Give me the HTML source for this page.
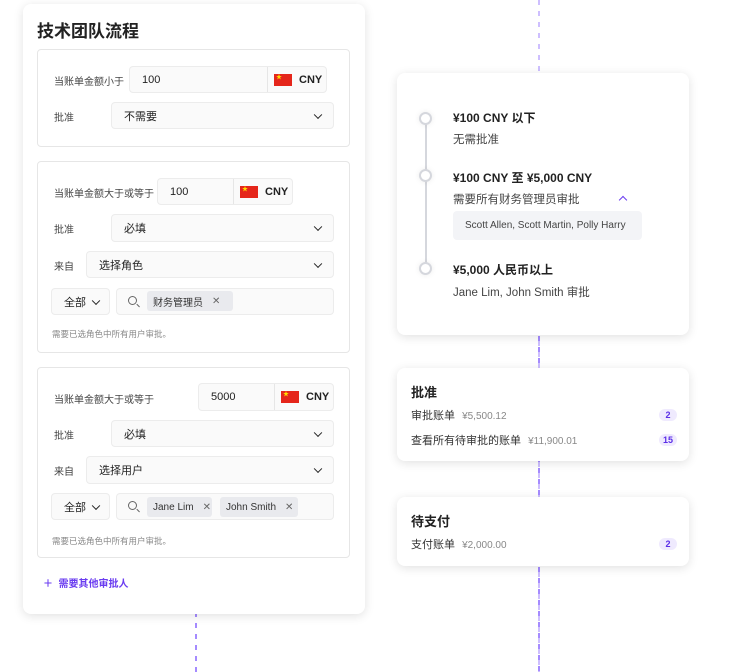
<!DOCTYPE html><html><head><meta charset="utf-8"><style>
*{box-sizing:border-box;margin:0;padding:0}
body{width:756px;height:672px;background:#fff;position:relative;overflow:hidden;font-family:"Liberation Sans","Noto Sans CJK SC",sans-serif;color:#222}
.a{position:absolute}
.dash{position:absolute;width:1.5px;background:repeating-linear-gradient(#a58bff 0 5px,transparent 5px 11px)}
.card{position:absolute;background:#fff;border-radius:8px;box-shadow:0 2px 10px rgba(0,0,0,.12)}
.box{position:absolute;border:1px solid #e6e6e6;border-radius:4px;background:#fff}
.f{position:absolute;border:1px solid #ececec;border-radius:4px;background:#fafafa;font-size:11px;display:flex;align-items:center;padding-left:12px}
.lbl{position:absolute;font-size:10px;color:#444}
.chev{position:absolute;right:12px;top:50%;width:6px;height:6px;border-right:1.6px solid #222;border-bottom:1.6px solid #222;transform:translateY(-70%) rotate(45deg)}
.cur{position:absolute;top:0;bottom:0;border-left:1px solid #e6e6e6;display:flex;align-items:center;padding-left:6px;font-weight:bold;font-size:11px}
.flag{width:18px;height:12px;background:#e5261b;margin-right:7px;position:relative}
.flag:after{content:"★";color:#ffde00;font-size:6px;position:absolute;left:2px;top:1px;line-height:6px}
.tag{position:absolute;background:#e9eaee;border-radius:3px;font-size:10px;display:flex;align-items:center;padding-left:6px;height:20px;color:#333}
.tag span{margin-left:9px;color:#666}
.help{position:absolute;font-size:8.5px;color:#888}
.mag{position:absolute;width:9px;height:9px;border:1.4px solid #666;border-radius:50%}
.mag:after{content:"";position:absolute;width:4px;height:1.4px;background:#666;right:-4px;bottom:-2px;transform:rotate(45deg)}
.circ{position:absolute;width:13px;height:13px;border:2px solid #d5d7dd;border-radius:50%;background:#fff;box-shadow:0 0 6px rgba(0,0,0,.08)}
.b{font-weight:bold}
.badge{position:absolute;right:12px;background:#efeafe;color:#5b2ee8;font-size:9px;font-weight:bold;border-radius:8px;width:18px;height:12px;text-align:center;line-height:12px}
</style></head><body>
<div class="dash" style="left:195px;top:612px;height:60px"></div>
<div class="dash" style="left:538px;top:0;height:672px;opacity:.55"></div>
<div class="dash" style="left:538px;top:336px;height:336px"></div>

<div class="card" style="left:23px;top:4px;width:342px;height:610px">
<div class="a b" style="left:14px;top:13px;font-size:17px">技术团队流程</div>
</div>

<div class="box" style="left:37px;top:49px;width:313px;height:98px"></div>
<div class="lbl" style="left:54px;top:73px">当账单金额小于</div>
<div class="f" style="left:129px;top:66px;width:198px;height:27px">100<div class="cur" style="left:137px;right:0"><div class="flag"></div>CNY</div></div>
<div class="lbl" style="left:54px;top:109px">批准</div>
<div class="f" style="left:111px;top:102px;width:223px;height:27px">不需要<div class="chev"></div></div>

<div class="box" style="left:37px;top:161px;width:313px;height:192px"></div>
<div class="lbl" style="left:54px;top:185px">当账单金额大于或等于</div>
<div class="f" style="left:157px;top:178px;width:136px;height:27px">100<div class="cur" style="left:75px;right:0"><div class="flag"></div>CNY</div></div>
<div class="lbl" style="left:54px;top:221px">批准</div>
<div class="f" style="left:111px;top:214px;width:223px;height:28px">必填<div class="chev"></div></div>
<div class="lbl" style="left:54px;top:258px">来自</div>
<div class="f" style="left:86px;top:251px;width:248px;height:27px">选择角色<div class="chev"></div></div>
<div class="f" style="left:51px;top:288px;width:59px;height:27px">全部<div class="chev" style="right:10px"></div></div>
<div class="f" style="left:116px;top:288px;width:218px;height:27px"></div>
<div class="mag" style="left:128px;top:296px"></div>
<div class="tag" style="left:147px;top:291px;width:86px">财务管理员<span>✕</span></div>
<div class="help" style="left:52px;top:328px">需要已选角色中所有用户审批。</div>

<div class="box" style="left:37px;top:367px;width:313px;height:191px"></div>
<div class="lbl" style="left:54px;top:391px">当账单金额大于或等于</div>
<div class="f" style="left:198px;top:383px;width:136px;height:28px">5000<div class="cur" style="left:75px;right:0"><div class="flag"></div>CNY</div></div>
<div class="lbl" style="left:54px;top:427px">批准</div>
<div class="f" style="left:111px;top:420px;width:223px;height:27px">必填<div class="chev"></div></div>
<div class="lbl" style="left:54px;top:463px">来自</div>
<div class="f" style="left:86px;top:456px;width:248px;height:28px">选择用户<div class="chev"></div></div>
<div class="f" style="left:51px;top:493px;width:59px;height:27px">全部<div class="chev" style="right:10px"></div></div>
<div class="f" style="left:116px;top:493px;width:218px;height:27px"></div>
<div class="mag" style="left:128px;top:501px"></div>
<div class="tag" style="left:147px;top:497px;width:65px">Jane Lim<span>✕</span></div>
<div class="tag" style="left:220px;top:497px;width:78px">John Smith<span>✕</span></div>
<div class="help" style="left:52px;top:535px">需要已选角色中所有用户审批。</div>
<div class="a b" style="left:43px;top:575px;font-size:10px;color:#6a3cf0">＋&nbsp; 需要其他审批人</div>

<div class="card" style="left:397px;top:73px;width:292px;height:262px"></div>
<div class="a" style="left:425px;top:124px;width:2px;height:142px;background:#d5d7dd"></div>
<div class="circ" style="left:419px;top:112px"></div>
<div class="circ" style="left:419px;top:169px"></div>
<div class="circ" style="left:419px;top:262px"></div>
<div class="a b" style="left:453px;top:109px;font-size:12px">¥100 CNY 以下</div>
<div class="a" style="left:453px;top:131px;font-size:11.5px;color:#444">无需批准</div>
<div class="a b" style="left:453px;top:169px;font-size:12px">¥100 CNY 至 ¥5,000 CNY</div>
<div class="a" style="left:453px;top:191px;font-size:11.5px;color:#444">需要所有财务管理员审批</div>
<div class="a" style="left:620px;top:197px;width:6px;height:6px;border-left:1.8px solid #6a3cf0;border-top:1.8px solid #6a3cf0;transform:rotate(45deg)"></div>
<div class="a" style="left:453px;top:211px;width:189px;height:29px;background:#f3f4f7;border-radius:4px;font-size:10px;color:#444;padding:9px 0 0 12px">Scott Allen, Scott Martin, Polly Harry</div>
<div class="a b" style="left:453px;top:261px;font-size:12px">¥5,000 人民币以上</div>
<div class="a" style="left:453px;top:284px;font-size:11.5px;color:#444">Jane Lim, John Smith 审批</div>

<div class="card" style="left:397px;top:368px;width:292px;height:93px">
<div class="a b" style="left:14px;top:14px;font-size:13px">批准</div>
<div class="a" style="left:14px;top:39px;font-size:11px;color:#333">审批账单 <span style="color:#888;font-size:10px;margin-left:4px">¥5,500.12</span></div>
<div class="badge" style="top:41px">2</div>
<div class="a" style="left:14px;top:64px;font-size:11px;color:#333">查看所有待审批的账单 <span style="color:#888;font-size:10px;margin-left:4px">¥11,900.01</span></div>
<div class="badge" style="top:66px">15</div>
</div>
<div class="card" style="left:397px;top:497px;width:292px;height:69px">
<div class="a b" style="left:14px;top:14px;font-size:13px">待支付</div>
<div class="a" style="left:14px;top:39px;font-size:11px;color:#333">支付账单 <span style="color:#888;font-size:10px;margin-left:4px">¥2,000.00</span></div>
<div class="badge" style="top:41px">2</div>
</div>
</body></html>
